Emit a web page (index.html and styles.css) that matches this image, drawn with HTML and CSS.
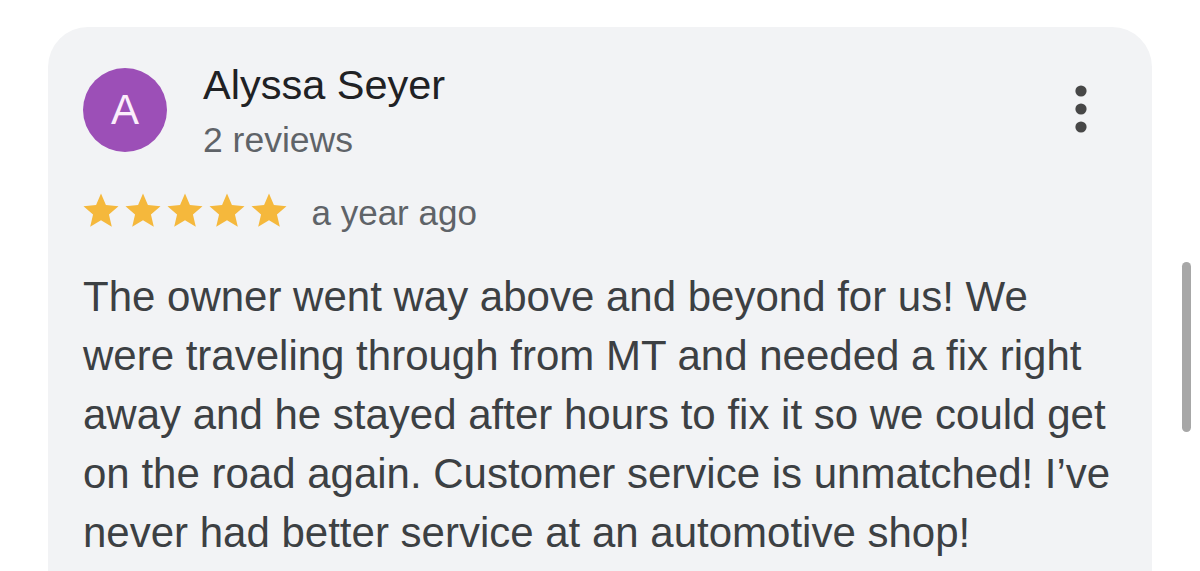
FILE: index.html
```html
<!DOCTYPE html>
<html lang="en">
<head>
<meta charset="utf-8">
<title>Review</title>
<link rel="stylesheet" href="styles.css">
</head>
<body>
<div class="page">
  <article class="card">
    <header class="header">
      <div class="avatar">A</div>
      <div class="info">
        <div class="name">Alyssa Seyer</div>
        <div class="count">2 reviews</div>
      </div>
      <svg class="kebab" width="24" height="48" viewBox="0 0 24 48" aria-hidden="true">
        <circle cx="12" cy="6" r="5.6"/>
        <circle cx="12" cy="24" r="5.6"/>
        <circle cx="12" cy="42" r="5.6"/>
      </svg>
    </header>
    <div class="rating">
      <div class="stars">
        <svg class="star" viewBox="0 0 24 24"><path d="M12 17.27L18.18 21l-1.64-7.03L22 9.24l-7.19-.61L12 2 9.19 8.63 2 9.24l5.46 4.73L5.82 21z"/></svg>
        <svg class="star" viewBox="0 0 24 24"><path d="M12 17.27L18.18 21l-1.64-7.03L22 9.24l-7.19-.61L12 2 9.19 8.63 2 9.24l5.46 4.73L5.82 21z"/></svg>
        <svg class="star" viewBox="0 0 24 24"><path d="M12 17.27L18.18 21l-1.64-7.03L22 9.24l-7.19-.61L12 2 9.19 8.63 2 9.24l5.46 4.73L5.82 21z"/></svg>
        <svg class="star" viewBox="0 0 24 24"><path d="M12 17.27L18.18 21l-1.64-7.03L22 9.24l-7.19-.61L12 2 9.19 8.63 2 9.24l5.46 4.73L5.82 21z"/></svg>
        <svg class="star" viewBox="0 0 24 24"><path d="M12 17.27L18.18 21l-1.64-7.03L22 9.24l-7.19-.61L12 2 9.19 8.63 2 9.24l5.46 4.73L5.82 21z"/></svg>
      </div>
      <span class="time">a year ago</span>
    </div>
    <p class="text">The owner went way above and beyond for us! We<br>were traveling through from MT and needed a fix right<br>away and he stayed after hours to fix it so we could get<br>on the road again. Customer service is unmatched! I’ve<br>never had better service at an automotive shop!</p>
  </article>
  <div class="scrollbar"></div>
</div>
</body>
</html>
```

FILE: styles.css
```css
html, body {
  margin: 0;
  padding: 0;
  background: #ffffff;
  height: 100%;
  overflow: hidden;
}

.page {
  position: relative;
  height: 571px;
  padding: 27px 0 0 48px;
  box-sizing: border-box;
  font-family: "Liberation Sans", Arial, Helvetica, sans-serif;
}

.card {
  width: 1104px;
  min-height: 600px;
  box-sizing: border-box;
  background: #f2f3f5;
  border-radius: 40px 40px 0 0;
  padding: 34px 30px 0 35px;
}

.header {
  display: flex;
  align-items: flex-start;
}

.avatar {
  width: 84px;
  height: 84px;
  margin-top: 7px;
  border-radius: 50%;
  background: #9c4fb7;
  color: #fbeefb;
  font-size: 42px;
  line-height: 84px;
  text-align: center;
  flex-shrink: 0;
}

.info {
  margin-left: 36px;
  display: flex;
  flex-direction: column;
}

.name {
  font-size: 41.5px;
  line-height: 48px;
  color: #202124;
}

.count {
  margin-top: 9px;
  font-size: 35.5px;
  line-height: 44px;
  color: #5f6368;
}

.kebab {
  margin-left: auto;
  margin-right: 29px;
  margin-top: 24px;
  fill: #474747;
}

.rating {
  display: flex;
  align-items: flex-start;
  height: 42px;
  margin-top: 28px;
}

.stars {
  display: flex;
  margin-left: -3.5px;
}

.star {
  width: 42px;
  height: 42px;
  fill: #f5b83c;
}

.time {
  margin-left: 22px;
  margin-top: 3px;
  font-size: 35px;
  line-height: 40px;
  color: #5f6368;
}

.text {
  margin: 35px 0 0 0;
  font-size: 42px;
  line-height: 59px;
  color: #3c4043;
  white-space: nowrap;
}

.scrollbar {
  position: absolute;
  left: 1182px;
  top: 262px;
  width: 9px;
  height: 170px;
  border-radius: 5px;
  background: #a7a7a7;
}
```
